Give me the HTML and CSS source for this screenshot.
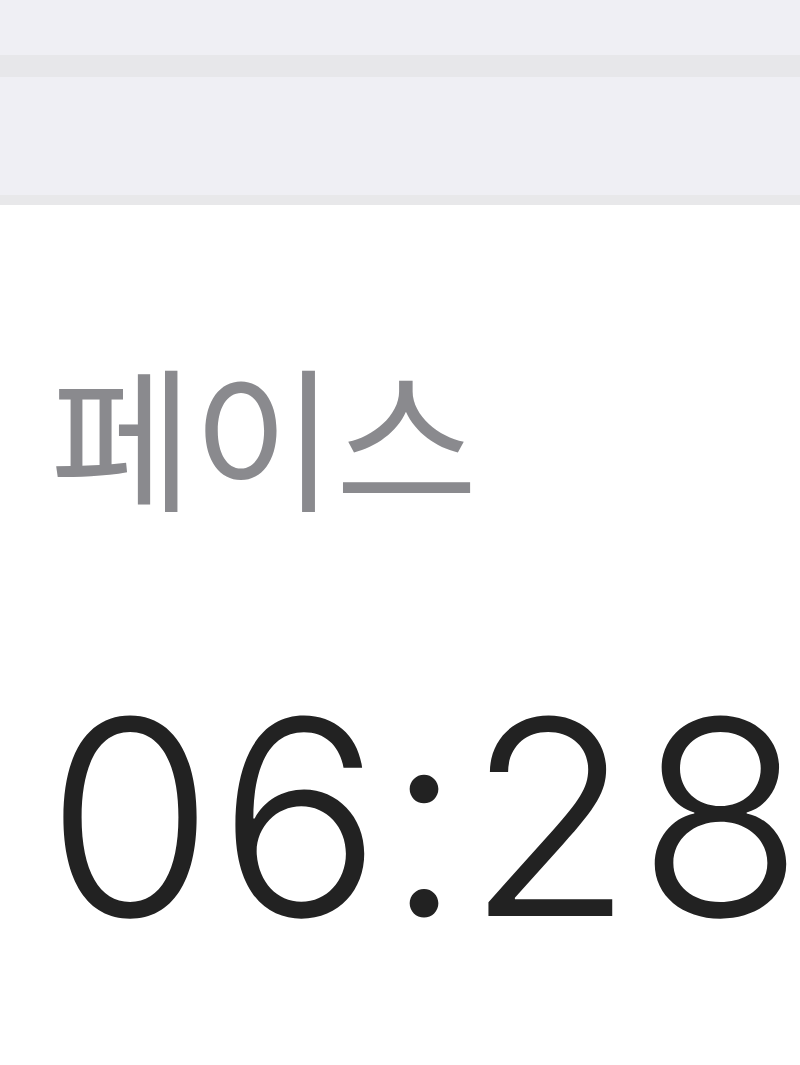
FILE: index.html
```html
<!DOCTYPE html>
<html lang="ko">
<head>
<meta charset="utf-8">
<link rel="stylesheet" href="styles.css">
</head>
<body>
<div class="top">
  <div class="band-a"></div>
  <div class="stripe"></div>
  <div class="band-b"></div>
  <div class="edge"></div>
</div>
<div class="content">
  <div class="label">페이스</div>
  <div class="value">06:28</div>
</div>
</body>
</html>
```
FILE: styles.css
```css
html, body {
  margin: 0;
  padding: 0;
  background: #ffffff;
  width: 800px;
  height: 1065px;
  overflow: hidden;
}
.top { display: flex; flex-direction: column; }
.band-a { height: 55px; background: #efeff4; }
.stripe { height: 22px; background: #e7e7ea; }
.band-b { height: 118px; background: #efeff4; }
.edge { height: 10px; background: #e8e8ea; }
.content {
  padding-left: 50px;
  display: flex;
  flex-direction: column;
}
.label {
  font-family: "Noto Sans CJK KR", "Noto Sans", sans-serif;
  font-size: 155px;
  line-height: 1;
  color: #8a8a8e;
  margin-top: 149px;
}
.value {
  font-family: Inter, "Liberation Sans", sans-serif;
  font-weight: 300;
  font-size: 272px;
  line-height: 1;
  letter-spacing: 4px;
  color: #222222;
  margin-top: 172px;
  margin-left: -4px;
  white-space: nowrap;
}
```
